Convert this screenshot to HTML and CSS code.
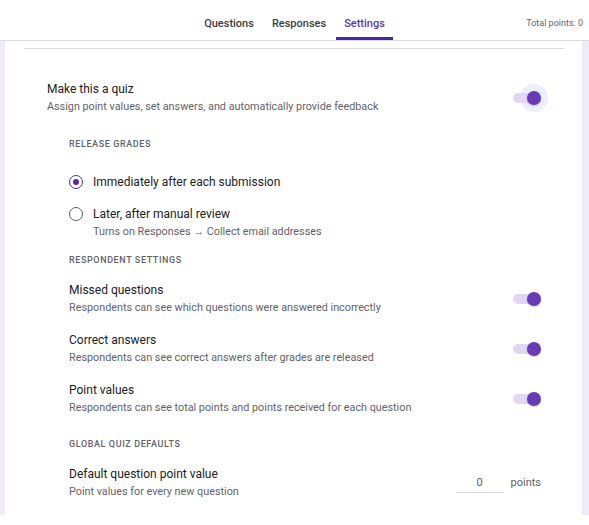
FILE: index.html
```html
<!DOCTYPE html>
<html lang="en">
<head>
    <meta charset="UTF-8">
    <meta name="viewport" content="width=device-width, initial-scale=1.0">
    <title>Quiz settings</title>
    <link rel="stylesheet" href="styles.css">
</head>
<body>
    <header class="topbar">
        <div class="topbar-side"></div>
        <nav class="tabs">
            <a class="tab">Questions</a>
            <a class="tab">Responses</a>
            <a class="tab active">Settings</a>
        </nav>
        <div class="topbar-side total">Total points: 0</div>
    </header>

    <main class="page">
        <section class="card">
            <div class="divider"></div>

            <div class="row quiz-row">
                <div class="row-text">
                    <div class="title">Make this a quiz</div>
                    <div class="sub">Assign point values, set answers, and automatically provide feedback</div>
                </div>
                <div class="toggle focused"><span class="track"></span><span class="knob"></span></div>
            </div>

            <div class="group">
                <div class="label label-first">Release grades</div>

                <label class="radio-row first">
                    <span class="radio checked"></span>
                    <span class="radio-text">
                        <span class="title">Immediately after each submission</span>
                    </span>
                </label>
                <label class="radio-row">
                    <span class="radio"></span>
                    <span class="radio-text">
                        <span class="title">Later, after manual review</span>
                        <span class="sub">Turns on Responses &rarr; Collect email addresses</span>
                    </span>
                </label>

                <div class="label">Respondent settings</div>

                <div class="row item">
                    <div class="row-text">
                        <div class="title">Missed questions</div>
                        <div class="sub">Respondents can see which questions were answered incorrectly</div>
                    </div>
                    <div class="toggle"><span class="track"></span><span class="knob"></span></div>
                </div>
                <div class="row item">
                    <div class="row-text">
                        <div class="title">Correct answers</div>
                        <div class="sub">Respondents can see correct answers after grades are released</div>
                    </div>
                    <div class="toggle"><span class="track"></span><span class="knob"></span></div>
                </div>
                <div class="row item">
                    <div class="row-text">
                        <div class="title">Point values</div>
                        <div class="sub">Respondents can see total points and points received for each question</div>
                    </div>
                    <div class="toggle"><span class="track"></span><span class="knob"></span></div>
                </div>

                <div class="label label-global">Global quiz defaults</div>

                <div class="row item">
                    <div class="row-text">
                        <div class="title">Default question point value</div>
                        <div class="sub">Point values for every new question</div>
                    </div>
                    <div class="points">
                        <input class="points-input" type="text" value="0">
                        <span class="points-unit">points</span>
                    </div>
                </div>
            </div>
        </section>
    </main>
</body>
</html>
```

FILE: styles.css
```css
* {
    box-sizing: border-box;
    margin: 0;
    padding: 0;
}

body {
    background: #fff;
    font-family: 'Roboto', 'Liberation Sans', sans-serif;
    color: #202124;
}

/* top bar */
.topbar {
    height: 41px;
    display: grid;
    grid-template-columns: 1fr auto 1fr;
    border-bottom: 1px solid #dadce0;
    background: #fff;
}

.tabs {
    display: flex;
    gap: 2px;
}

.tab {
    display: block;
    height: 40px;
    padding: 16px 8px 5px;
    line-height: 16px;
    font-size: 11px;
    font-weight: 500;
    color: #3c4043;
    border-bottom: 3px solid transparent;
    cursor: pointer;
}

.tab.active {
    color: #5e35b1;
    border-bottom-color: #4527a0;
}

.total {
    text-align: right;
    padding: 16px 6px 0 0;
    line-height: 14px;
    font-size: 9px;
    color: #5f6368;
}

/* page */
.page {
    height: 474px;
    background: #f0ebf8;
    padding: 0 7px 0 5px;
}

.card {
    height: 100%;
    background: #fff;
    padding: 7px 18px 0 19px;
}

.divider {
    height: 1px;
    background: #dadce0;
}

.row {
    display: flex;
    align-items: center;
    justify-content: space-between;
}

.quiz-row {
    margin-top: 31px;
    padding: 0 23px 0 23px;
}

.title {
    display: block;
    font-size: 12px;
    line-height: 18px;
    color: #202124;
}

.sub {
    display: block;
    margin-top: 1px;
    font-size: 10.8px;
    line-height: 16px;
    color: #5f6368;
}

.group {
    padding: 0 23px 0 45px;
}

.label {
    margin-top: 13px;
    font-size: 9px;
    line-height: 14px;
    font-weight: 500;
    letter-spacing: 0.6px;
    text-transform: uppercase;
    color: #5f6368;
}

.label-first {
    margin-top: 22px;
}

.label-global {
    margin-top: 21px;
}

/* radios */
.radio-row {
    display: flex;
    align-items: flex-start;
    gap: 10px;
    margin-top: 14px;
    cursor: pointer;
}

.radio-row.first {
    margin-top: 22px;
}

.radio {
    flex: none;
    width: 14px;
    height: 14px;
    margin-top: 2px;
    border: 1.5px solid #5f6368;
    border-radius: 50%;
    display: flex;
    align-items: center;
    justify-content: center;
}

.radio.checked {
    border-color: #512da8;
}

.radio.checked::after {
    content: "";
    width: 6px;
    height: 6px;
    border-radius: 50%;
    background: #512da8;
}

/* items with toggles */
.item {
    margin-top: 15px;
}

.label + .item {
    margin-top: 14px;
}

.label-global + .item {
    margin-top: 14px;
}

.toggle {
    position: relative;
    flex: none;
    width: 28px;
    height: 14px;
}

.toggle .track {
    position: absolute;
    left: 0;
    top: 2px;
    width: 24px;
    height: 10px;
    border-radius: 5px;
    background: #e1d7f1;
}

.toggle .knob {
    position: absolute;
    right: 0;
    top: 0;
    width: 14px;
    height: 14px;
    border-radius: 50%;
    background: #673ab7;
    box-shadow: 0 1px 2px rgba(0, 0, 0, 0.2);
}

.toggle.focused::before {
    content: "";
    position: absolute;
    right: -7px;
    top: -7px;
    width: 28px;
    height: 28px;
    border-radius: 50%;
    background: #eaeffb;
}

/* point value */
.points {
    display: flex;
    align-items: center;
    gap: 7px;
    margin-top: 2px;
}

.points-input {
    width: 48px;
    height: 19px;
    border: none;
    border-bottom: 1px solid #dadce0;
    padding: 0 0 2px;
    text-align: center;
    font-family: inherit;
    font-size: 11px;
    color: #5f6368;
    background: transparent;
    outline: none;
}

.points-unit {
    font-size: 11px;
    color: #5f6368;
    margin-top: -2px;
}
```
